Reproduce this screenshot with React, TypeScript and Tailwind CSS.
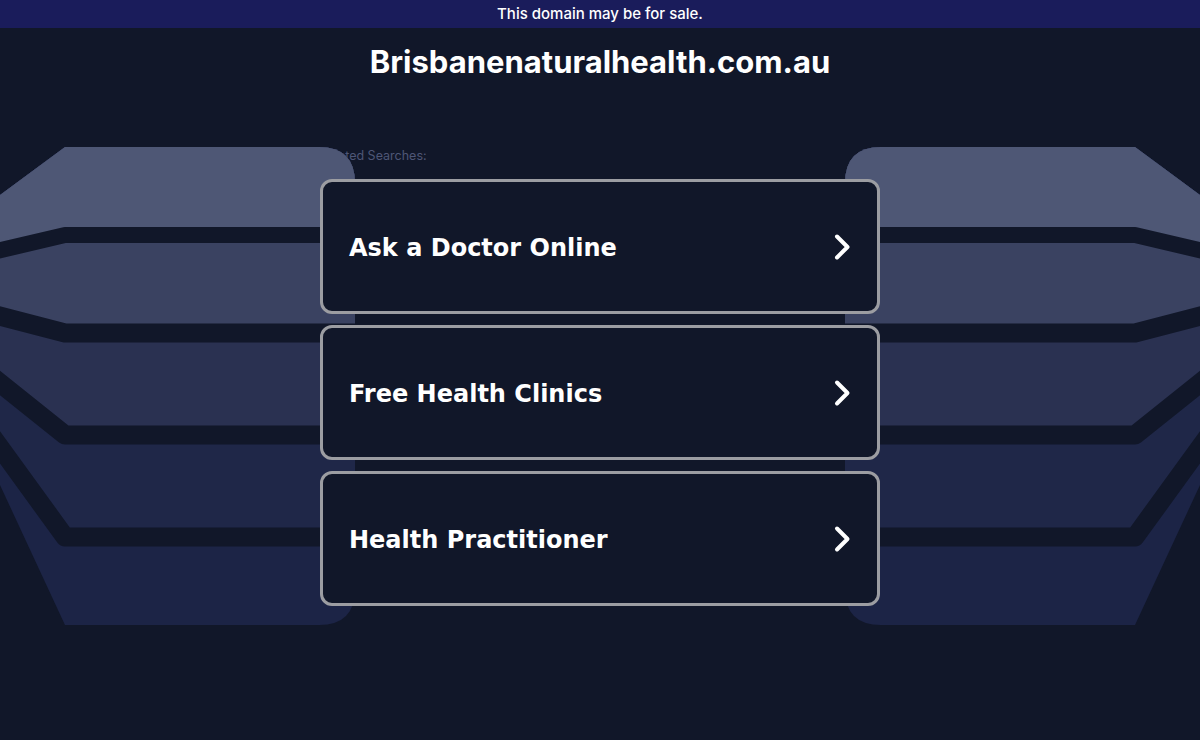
import React from "react";

const BG = "#111729";

function SideShape() {
  return (
    <g>
      <defs>
        <clipPath id="leftClip">
          <path d="M0,195 L65,147 L319,147 Q355,147 355,183 L355,589 Q355,625 319,625 L65,625 L0,485 Z" />
        </clipPath>
      </defs>
      <g clipPath="url(#leftClip)">
        <rect x="0" y="100" width="400" height="560" fill="#1c2446" />
        <polygon points="0,0 400,0 400,537 65,537 0,447" fill="#1f2748" />
        <polygon points="0,0 400,0 400,435 65,435 0,383" fill="#2a3151" />
        <polygon points="0,0 400,0 400,333 65,333 0,316" fill="#3a4261" />
        <polygon points="0,0 400,0 400,235 65,235 0,250" fill="#4e5775" />
        <polyline points="-20,255 65,235 400,235" fill="none" stroke={BG} strokeWidth="16" strokeLinejoin="round" />
        <polyline points="-20,311 65,333 400,333" fill="none" stroke={BG} strokeWidth="19" strokeLinejoin="round" />
        <polyline points="-20,367 65,435 400,435" fill="none" stroke={BG} strokeWidth="19" strokeLinejoin="round" />
        <polyline points="-14,428 65,537 400,537" fill="none" stroke={BG} strokeWidth="19" strokeLinejoin="round" />
      </g>
    </g>
  );
}

function Chevron() {
  return (
    <svg width="20" height="28" viewBox="0 0 20 28" fill="none">
      <path d="M6 3.5 L16.5 14 L6 24.5" stroke="#ffffff" strokeWidth="4" strokeLinecap="round" strokeLinejoin="round" />
    </svg>
  );
}

const items = ["Ask a Doctor Online", "Free Health Clinics", "Health Practitioner"];

export default function App() {
  return (
    <div className="relative w-[1200px] h-[740px] overflow-hidden bg-[#111729]" style={{ fontFamily: "Inter, 'Noto Sans', sans-serif" }}>
      <div className="h-[28px] bg-[#1a1c5b] flex items-center justify-center text-white text-[15px] font-medium">
        This domain may be for sale.
      </div>
      <div className="mt-[16px] h-[36px] flex items-center justify-center text-white text-[31px] font-bold leading-[36px]">
        Brisbanenaturalhealth.com.au
      </div>
      <div className="w-[560px] mx-auto mt-[68px] text-[12.5px] leading-[16px] text-[#4e5676]">
        Related Searches:
      </div>
      <svg className="absolute left-0 top-0 pointer-events-none" width="1200" height="740" viewBox="0 0 1200 740">
        <SideShape />
        <g transform="translate(1200,0) scale(-1,1)">
          <SideShape />
        </g>
      </svg>
      <div className="relative w-[560px] mx-auto mt-[15px] flex flex-col gap-[11px]">
        {items.map((t) => (
          <div
            key={t}
            className="h-[135px] rounded-[12px] border-[3px] border-[#9c9da2] bg-[#111729] flex items-center justify-between pl-[26px] pr-[26px]"
          >
            <span className="text-white text-[24px] font-bold translate-y-[1px]" style={{ fontFamily: "'DejaVu Sans', Verdana, sans-serif" }}>
              {t}
            </span>
            <Chevron />
          </div>
        ))}
      </div>
    </div>
  );
}
